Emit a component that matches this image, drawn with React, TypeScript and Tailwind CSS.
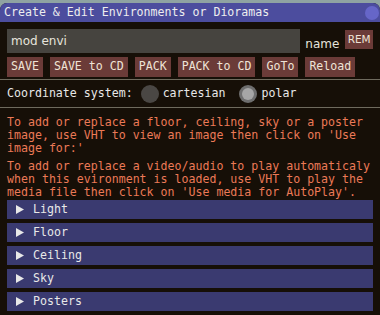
import React from 'react';

const mono = { fontFamily: '"DejaVu Sans Mono", "Liberation Mono", monospace' };
const sans = { fontFamily: '"DejaVu Sans", "Liberation Sans", sans-serif' };

const actions = ['SAVE', 'SAVE to CD', 'PACK', 'PACK to CD', 'GoTo', 'Reload'];
const sections = ['Light', 'Floor', 'Ceiling', 'Sky', 'Posters'];

const imageHelp = [
  'To add or replace a floor, ceiling, sky or a poster',
  "image, use VHT to view an image then click on 'Use",
  "image for:'",
];
const mediaHelp = [
  'To add or replace a video/audio to play automaticaly',
  'when this evironment is loaded, use VHT to play the',
  "media file then click on 'Use media for AutoPlay'.",
];

const Separator: React.FC = () => <div className="-mx-[7px] h-px bg-[#6f6b5e]" />;

const Header: React.FC<{ label: string }> = ({ label }) => (
  <div className="flex h-[19px] w-[366px] items-center bg-[#3a3a70] pl-[9px] text-[#e8e8e8]">
    <svg width="8" height="9" viewBox="0 0 8 9" className="shrink-0">
      <path d="M0 0 L8 4.5 L0 9 Z" fill="#e8e8e8" />
    </svg>
    <span className="ml-[9px] text-[11.6px] leading-none">{label}</span>
  </div>
);

export default function App() {
  return (
    <div className="h-[315px] w-[380px] overflow-hidden bg-[#8fa3a2]" style={mono}>
      <div className="mt-[3px] h-[312px] overflow-hidden rounded-t-[7px] bg-[#160f07]">
        <div className="flex h-[19px] items-center justify-between bg-[#4c4d9e] pl-[4px] pr-[1px]">
          <span className="text-[11.6px] leading-none text-[#eeeeee]">
            Create &amp; Edit Environments or Dioramas
          </span>
          <div className="h-[14px] w-[14px] rounded-full bg-[#6666c8]" />
        </div>

        <div className="px-[7px] pt-[7px]">
          <div className="flex items-start">
            <div
              className="flex h-[24px] w-[297px] items-center bg-[#46443f] pl-[4px] text-[12px] text-[#e6e4dc]"
              style={sans}
            >
              mod envi
            </div>
            <span className="ml-[5px] mt-[8px] text-[12px] leading-[14px] text-[#e6e4dc]" style={sans}>
              name
            </span>
            <div
              className="ml-[6px] mt-px flex h-[19px] w-[28px] items-center justify-center bg-[#6b3b38] text-[10.5px] text-[#efe3d6]"
              style={sans}
            >
              REM
            </div>
          </div>

          <div className="mt-[4px] flex gap-[7px]">
            {actions.map((a) => (
              <div
                key={a}
                className="flex h-[20px] items-center bg-[#6b3b38] px-[4px] text-[11.6px] leading-none whitespace-pre text-[#efe3d6]"
              >
                {a}
              </div>
            ))}
          </div>

          <div className="mt-[2px]">
            <Separator />
          </div>

          <div className="flex h-[27px] items-center text-[11.6px] text-[#e8e8e8]">
            <span>Coordinate system:</span>
            <div className="ml-[8px] h-[18px] w-[18px] rounded-full bg-[#4a4744]" />
            <span className="ml-[4px]">cartesian</span>
            <div className="ml-[14px] flex h-[18px] w-[18px] items-center justify-center rounded-full bg-[#6e6e6e]">
              <div className="h-[12px] w-[12px] rounded-full bg-[#a6a6a6]" />
            </div>
            <span className="ml-[4px]">polar</span>
          </div>

          <Separator />

          <div className="mt-[8px] text-[11.6px] leading-[13px] whitespace-pre text-[#ec7a57]">
            {imageHelp.map((l, i) => (
              <div key={i}>{l}</div>
            ))}
            <div className="mt-[5px]">
              {mediaHelp.map((l, i) => (
                <div key={i}>{l}</div>
              ))}
            </div>
          </div>

          <div className="mt-px flex flex-col gap-[4px]">
            {sections.map((s) => (
              <Header key={s} label={s} />
            ))}
          </div>
        </div>
      </div>
    </div>
  );
}
